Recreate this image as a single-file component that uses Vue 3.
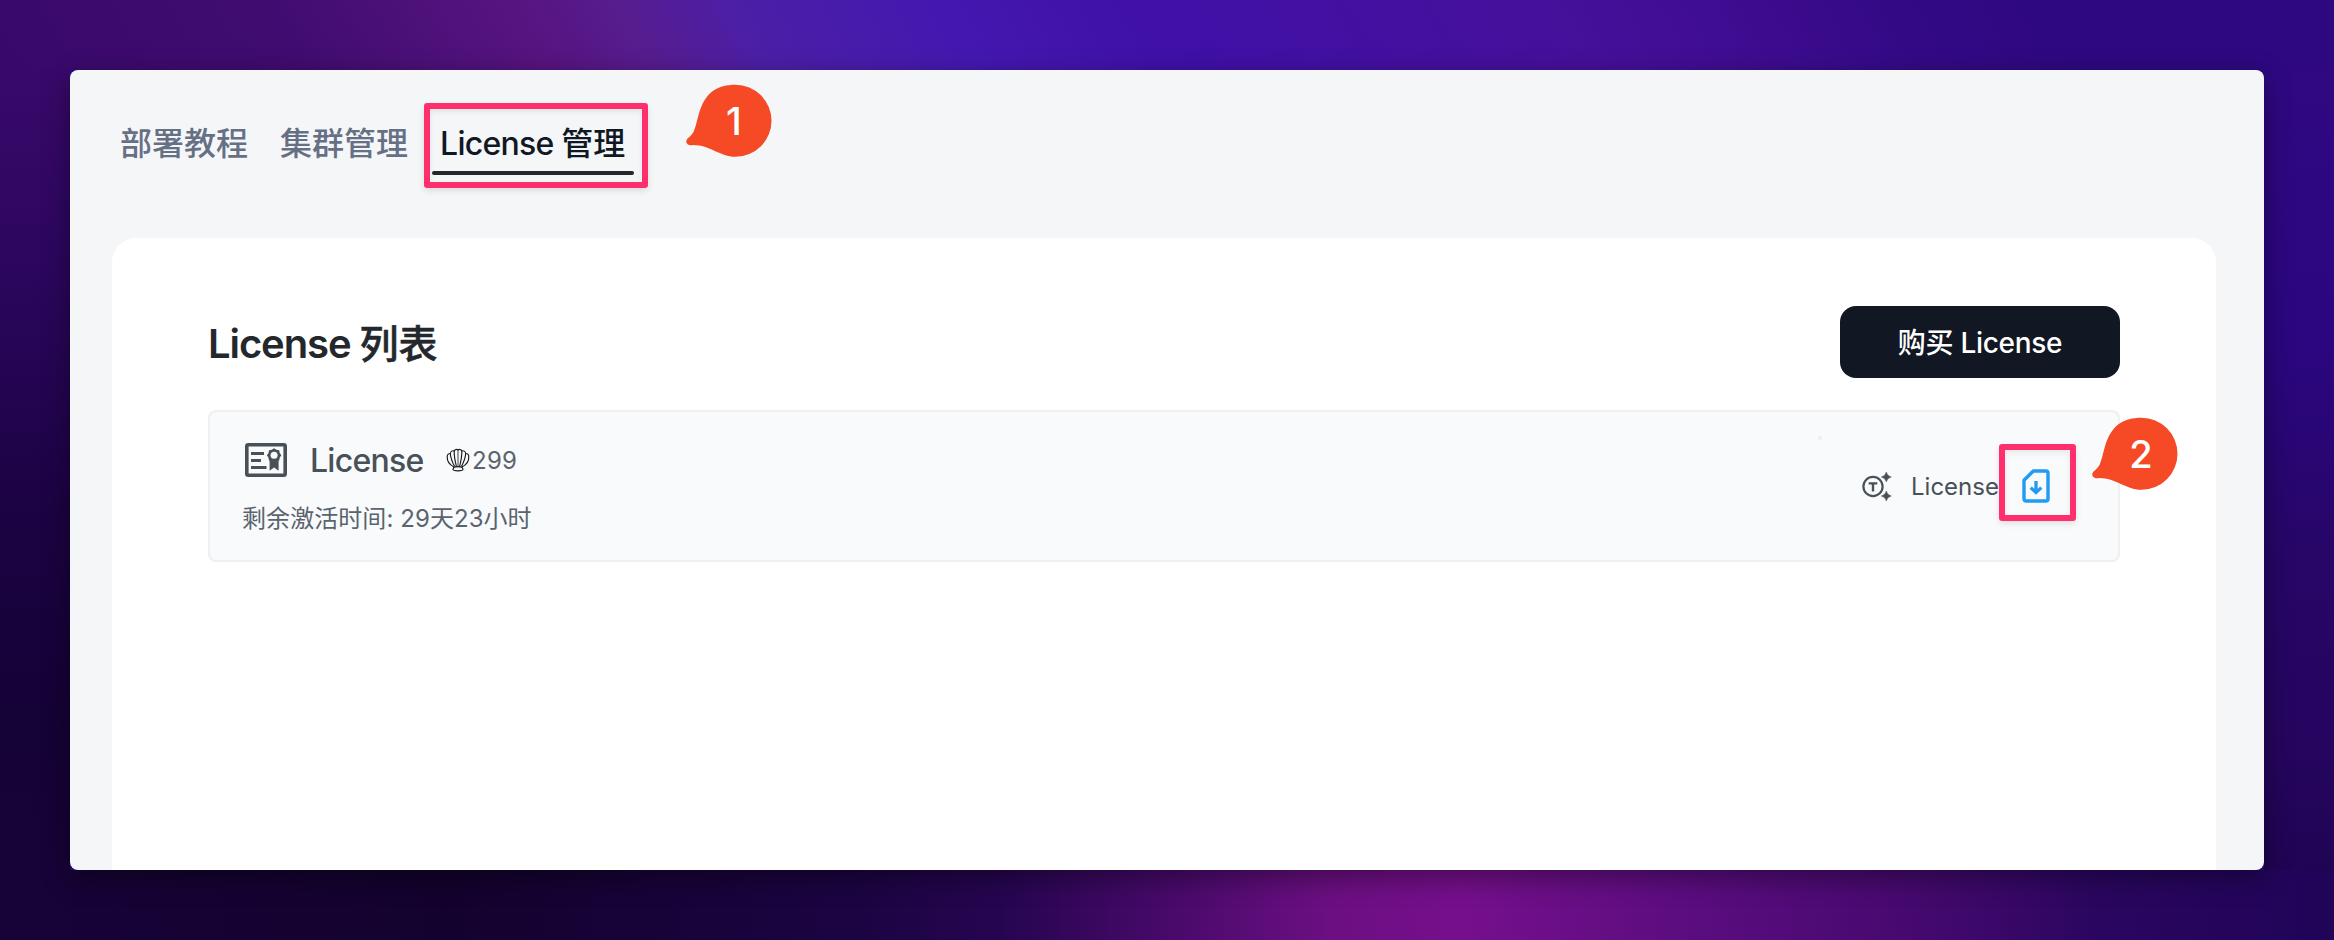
<script setup>
const tabs = [
  { latin: '', text: '部署教程', active: false },
  { latin: '', text: '集群管理', active: false },
  { latin: 'License ', text: '管理', active: true },
]
</script>

<template>
  <div class="stage">
    <main class="window">
      <nav class="tabs">
        <div v-for="t in tabs" :key="t.text" class="tab" :class="{ active: t.active }">
          <span class="tab-latin">{{ t.latin }}</span><span>{{ t.text }}</span>
        </div>
      </nav>

      <section class="card">
        <header class="head">
          <h1><span class="title-latin">License </span><span class="title-cjk">列表</span></h1>
          <button class="buy">购买 License</button>
        </header>

        <div class="row">
          <div class="info">
            <div class="line">
              <svg class="cert" viewBox="0 0 42 34">
                <rect x="1.8" y="1.8" width="38.4" height="30.4" rx="1.5" fill="none" stroke="#485058" stroke-width="3.6" />
                <path d="M6 10.5H19M6 17.5H16M6 24.5H21.5" stroke="#485058" stroke-width="3.2" />
                <path d="M24.6 16H33.6V27.8L29.1 24.6L24.6 27.8Z" fill="#485058" />
                <path d="M29.1 5.2L31.4 6.8L34.2 7.2L34.7 10L36.3 12.3L34.7 14.7L34.2 17.5L31.4 18L29.1 19.6L26.8 18L24 17.5L23.5 14.7L21.9 12.3L23.5 10L24 7.2L26.8 6.8Z" fill="#485058" />
                <circle cx="29.1" cy="12.3" r="3.5" fill="#f9fafc" />
              </svg>
              <span class="name">License</span>
              <svg class="shell" viewBox="0 0 24 24" fill="none" stroke="#16191d" stroke-width="1.15" stroke-linejoin="round">
                <path d="M8 19C4 17 1 13 1.2 8.5C1.3 6.5 2.8 5.3 4.3 5.5C4.5 3.3 6.5 2.2 8.2 3C9 1.3 10.8 1 12 2C13.2 1 15 1.3 15.8 3C17.5 2.2 19.5 3.3 19.7 5.5C21.2 5.3 22.7 6.5 22.8 8.5C23 13 20 17 16 19" />
                <path d="M8 19.2C9 18.5 15 18.5 16 19.2L17 21.3C17 22.6 14.5 22.8 12 22.8S7 22.6 7 21.3Z" />
                <path d="M8.6 18.6C6.5 14.5 4.5 9.5 4.3 5.5M10.4 18.3C8.8 12 8 7 8.2 3M13.6 18.3C15.2 12 16 7 15.8 3M15.4 18.6C17.5 14.5 19.5 9.5 19.7 5.5" />
                <path d="M12 2V18.3" stroke-width="0.8" />
              </svg>
              <span class="price">299</span>
            </div>
            <div class="remain">剩余激活时间: 29天23小时</div>
          </div>

          <div class="actions">
            <svg class="token" viewBox="0 0 30 30">
              <circle cx="11" cy="15.5" r="9.6" fill="none" stroke="#485058" stroke-width="2.2" />
              <path d="M6.7 12.4H15.3M11 12.4V20.6" fill="none" stroke="#485058" stroke-width="2.4" />
              <path d="M24.3 1Q25.2 5.1 29.3 6Q25.2 6.9 24.3 11Q23.4 6.9 19.3 6Q23.4 5.1 24.3 1ZM24.3 20Q25.2 24.1 29.3 25Q25.2 25.9 24.3 30Q23.4 25.9 19.3 25Q23.4 24.1 24.3 20Z" fill="#485058" stroke="#485058" stroke-width="0.5" />
            </svg>
            <span class="file-label">License</span>
            <svg class="download" viewBox="0 0 28 34">
              <path d="M11.3 2H23.8Q26 2 26 4.2V29.8Q26 32 23.8 32H4.2Q2 32 2 29.8V11.3Z" fill="none" stroke="#219bf4" stroke-width="3.4" stroke-linejoin="round" />
              <path d="M14 12V23.5M8.7 18.6L14 23.6L19.3 18.6" fill="none" stroke="#219bf4" stroke-width="3.3" />
            </svg>
          </div>
        </div>
      </section>
    </main>

    <i class="speck"></i>
    <div class="mark mark-tab"></div>
    <div class="mark mark-file"></div>
    <div v-for="n in 2" :key="n" class="pin" :class="'pin-' + n">
      <svg viewBox="0 0 86 74">
        <path d="M49.5 0.8A36 36 0 1 1 49.5 72.8C34 72.8 24 61 7 61C3 62 0 60 0.3 57C0.6 54 5 53 8 47C14 35 12 0.8 49.5 0.8Z" fill="#f54a25" />
      </svg>
      <span>{{ n }}</span>
    </div>
  </div>
</template>

<style>
body {
  margin: 0;
}
</style>

<style scoped>
.stage {
  position: relative;
  box-sizing: border-box;
  width: 2334px;
  height: 940px;
  padding: 70px;
  overflow: hidden;
  font-family: Inter, "Noto Sans CJK SC", sans-serif;
  background:
    linear-gradient(90deg, #170338 0, #14022e 450px, #1b0442 850px, #260550 1000px, #4a0a6c 1180px, #6c0f82 1330px, #760f8c 1460px, #5c0d80 1680px, #45096e 1920px, #2a0660 2100px, #200458 2334px) 0 870px / 100% 70px no-repeat,
    linear-gradient(180deg, #2f0882 0, #2b0680 270px, #270668 480px, #25055e 680px, #200454 800px) 2264px 70px / 70px 800px no-repeat,
    linear-gradient(180deg, #38096a 0, #2d0660 180px, #1c0344 430px, #150236 650px, #170338 800px) 0 70px / 70px 800px no-repeat,
    linear-gradient(60deg, #38096a 0, #400c70 260px, #561480 475px, #571c8e 565px, #4c1fa6 665px, #4418b0 845px, #4010a8 1020px, #45109a 1380px, #3f0d92 1500px, #330985 1680px, #2d0880 1820px, #2d0880 2056px) 0 0 / 100% 70px no-repeat,
    #2d0880;
}
.window {
  box-sizing: border-box;
  height: 800px;
  padding: 0 48px 0 42px;
  border-radius: 8px;
  overflow: hidden;
  background: #f4f6f8;
  box-shadow: 0 8px 28px rgba(0, 0, 0, 0.4);
}
.tabs {
  display: flex;
  height: 168px;
}
.tab {
  box-sizing: border-box;
  height: 105px;
  padding: 53px 8px 0;
  margin-right: 16px;
  font-size: 32px;
  line-height: 42px;
  font-weight: 500;
  color: #667085;
  white-space: pre;
}
.tab-latin {
  letter-spacing: -0.75px;
}
.tab.active {
  position: relative;
  color: #111824;
}
.tab.active::after {
  content: "";
  position: absolute;
  left: 0;
  bottom: 0;
  width: 202px;
  height: 4px;
  border-radius: 2px;
  background: #24282c;
}
.card {
  box-sizing: border-box;
  height: 700px;
  padding: 68px 96px 0;
  border-radius: 24px;
  background: #fff;
}
.head {
  display: flex;
  justify-content: space-between;
  align-items: center;
  height: 72px;
  margin-bottom: 32px;
}
h1 {
  margin: 0;
  padding-top: 3px;
  font-size: 40px;
  line-height: 56px;
  font-weight: 600;
  color: #24282c;
  white-space: pre;
}
.title-latin {
  letter-spacing: -1.1px;
}
.title-cjk {
  font-size: 39px;
  font-weight: 500;
  -webkit-text-stroke: 0.5px #24282c;
}
.buy {
  width: 280px;
  height: 72px;
  padding: 2px 0 0;
  border: 0;
  border-radius: 16px;
  background: #111824;
  color: #fff;
  font: 500 28px/40px Inter, "Noto Sans CJK SC", sans-serif;
  letter-spacing: -0.3px;
}
.row {
  box-sizing: border-box;
  display: flex;
  justify-content: space-between;
  height: 152px;
  border: 2px solid #eff0f1;
  border-radius: 8px;
  background: #f9fafc;
}
.info {
  padding: 25px 0 0 32px;
}
.line {
  display: flex;
  align-items: center;
  height: 46px;
}
.cert {
  width: 42px;
  height: 34px;
  margin: 0 23px 0 3px;
}
.name {
  width: 112px;
  font-size: 32px;
  font-weight: 500;
  letter-spacing: -0.75px;
  color: #485058;
}
.shell {
  width: 24px;
  height: 24px;
  margin: 0 2px 0 24px;
}
.price {
  font-size: 24px;
  letter-spacing: 0.3px;
  color: #5a646e;
}
.remain {
  margin-top: 19px;
  font-size: 24px;
  line-height: 34px;
  letter-spacing: 0.07px;
  color: #5a646e;
  white-space: nowrap;
}
.actions {
  display: flex;
  align-items: center;
  padding-right: 69px;
}
.token {
  width: 30px;
  height: 30px;
}
.file-label {
  width: 90px;
  margin: 0 21px 0 19px;
  font-size: 24px;
  color: #485058;
}
.download {
  width: 28px;
  height: 34px;
  margin-right: -1px;
}
.speck {
  position: absolute;
  left: 1818px;
  top: 436px;
  width: 4px;
  height: 4px;
  background: #eff0f1;
}
.mark {
  position: absolute;
  box-sizing: border-box;
  border: 6px solid #ff2f6d;
  border-radius: 3px;
  box-shadow: 0 3px 6px rgba(0, 0, 0, 0.1), inset 0 3px 6px rgba(0, 0, 0, 0.07);
}
.mark-tab {
  left: 424px;
  top: 103px;
  width: 224px;
  height: 85px;
}
.mark-file {
  left: 1999px;
  top: 444px;
  width: 77px;
  height: 77px;
}
.pin {
  position: absolute;
  width: 86px;
  height: 74px;
  color: #fff;
}
.pin svg {
  display: block;
  width: 86px;
  height: 74px;
}
.pin span {
  position: absolute;
  left: 13px;
  top: 0;
  width: 72px;
  font-size: 38px;
  line-height: 74px;
  font-weight: 500;
  text-align: center;
}
.pin-1 {
  left: 686px;
  top: 84px;
}
.pin-1 span {
  left: 12px;
}
.pin-2 {
  left: 2092px;
  top: 417px;
}
</style>
